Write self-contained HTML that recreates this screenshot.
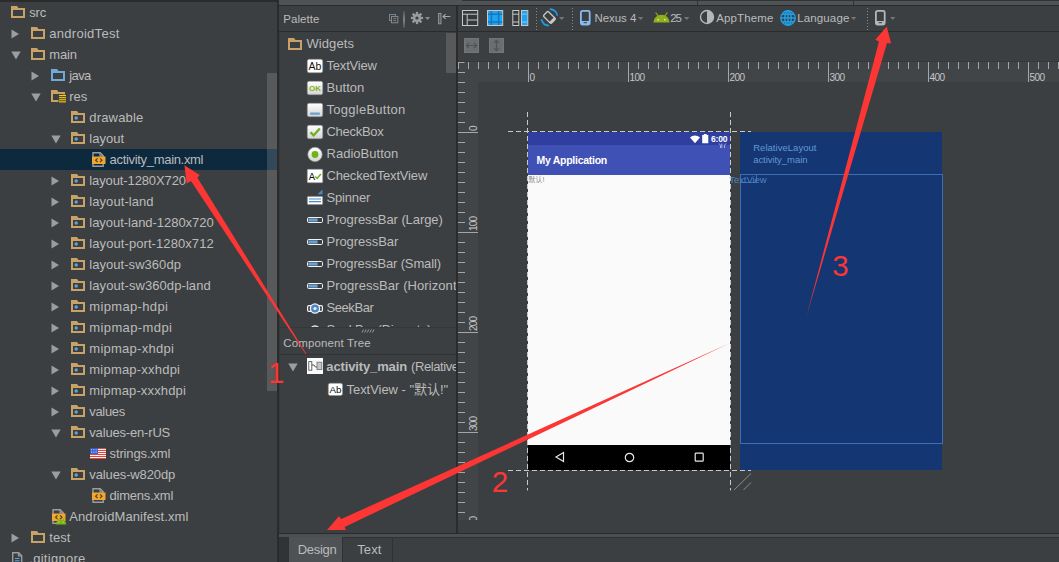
<!DOCTYPE html>
<html lang="zh"><head><meta charset="utf-8"><title>Android Studio - activity_main.xml</title>
<style>
html,body{margin:0;padding:0;}
body{width:1059px;height:562px;overflow:hidden;background:#3c3f41;position:relative;
font-family:"Liberation Sans","Noto Sans CJK SC",sans-serif;}
#root{position:absolute;left:0;top:0;width:1059px;height:562px;overflow:hidden;}
#root div,#root svg,#root span{position:absolute;display:block;}
#root svg{overflow:visible;}
.t{white-space:nowrap;}
.v{transform-origin:0 0;transform:rotate(-90deg);}
</style></head>
<body><div id="root">
<svg width="0" height="0" style="left:0;top:0"><defs><linearGradient id="wg" x1="0" y1="0" x2="0" y2="1"><stop offset="0" stop-color="#ffffff"/><stop offset="1" stop-color="#d4d4d4"/></linearGradient></defs></svg>
<div style="left:0px;top:0px;width:277px;height:562px;background:#3c3f41;"></div>
<div style="left:0px;top:0px;width:277px;height:1.5px;background:#2b2b2b;"></div>
<div style="left:0px;top:149px;width:277px;height:21px;background:#0d293e;"></div>
<div style="left:267px;top:73px;width:10px;height:318px;background:rgba(166,166,166,0.25);"></div>
<svg style="left:11px;top:6px;" width="16" height="14" viewBox="0 0 16 14"><path d="M0 0h6l1.5 2H14v10H0z" fill="#c9a267"/><rect x="2" y="4" width="10" height="6" fill="#3c3f41"/></svg>
<span id="t1" class="t" style="left:29.3px;top:2px;height:21px;line-height:21px;font-size:13px;color:#bbbbbb;letter-spacing:-0.172px;">src</span>
<svg style="left:31px;top:27px;" width="16" height="14" viewBox="0 0 16 14"><path d="M0 0h6l1.5 2H14v10H0z" fill="#c9a267"/><rect x="2" y="4" width="10" height="6" fill="#3c3f41"/></svg>
<svg style="left:11.3px;top:28.5px;" width="9" height="10" viewBox="0 0 9 10"><path d="M0.5 0.5L8 5L0.5 9.5z" fill="#9b9ea0"/></svg>
<span id="t2" class="t" style="left:49.3px;top:23px;height:21px;line-height:21px;font-size:13px;color:#bbbbbb;letter-spacing:0.278px;">androidTest</span>
<svg style="left:31px;top:48px;" width="16" height="14" viewBox="0 0 16 14"><path d="M0 0h6l1.5 2H14v10H0z" fill="#c9a267"/><rect x="2" y="4" width="10" height="6" fill="#3c3f41"/></svg>
<svg style="left:10.5px;top:51px;" width="10" height="9" viewBox="0 0 10 9"><path d="M0.3 0.5h9.4L5 8.5z" fill="#9b9ea0"/></svg>
<span id="t3" class="t" style="left:49.3px;top:44px;height:21px;line-height:21px;font-size:13px;color:#bbbbbb;letter-spacing:-0.162px;">main</span>
<svg style="left:51px;top:69px;" width="16" height="14" viewBox="0 0 16 14"><path d="M0 0h6l1.5 2H14v10H0z" fill="#6fa9d8"/><rect x="2" y="4" width="10" height="6" fill="#3c3f41"/></svg>
<svg style="left:31.3px;top:70.5px;" width="9" height="10" viewBox="0 0 9 10"><path d="M0.5 0.5L8 5L0.5 9.5z" fill="#9b9ea0"/></svg>
<span id="t4" class="t" style="left:69.3px;top:65px;height:21px;line-height:21px;font-size:13px;color:#bbbbbb;letter-spacing:-0.620px;">java</span>
<svg style="left:51px;top:90px;" width="16" height="14" viewBox="0 0 16 14"><path d="M0 0h6l1.5 2H14v10H0z" fill="#c9a267"/><rect x="2" y="4" width="10" height="6" fill="#3c3f41"/><rect x="7.5" y="4.5" width="8" height="9" fill="#3c3f41"/><rect x="8" y="5.0" width="7" height="1.1" fill="#ffcc00"/><rect x="8" y="7.1" width="7" height="1.1" fill="#ffcc00"/><rect x="8" y="9.2" width="7" height="1.1" fill="#ffcc00"/><rect x="8" y="11.3" width="7" height="1.1" fill="#ffcc00"/></svg>
<svg style="left:30.5px;top:93px;" width="10" height="9" viewBox="0 0 10 9"><path d="M0.3 0.5h9.4L5 8.5z" fill="#9b9ea0"/></svg>
<span id="t5" class="t" style="left:69.3px;top:86px;height:21px;line-height:21px;font-size:13px;color:#bbbbbb;letter-spacing:-0.031px;">res</span>
<svg style="left:71px;top:111px;" width="16" height="14" viewBox="0 0 16 14"><path d="M0 0h6l1.5 2H14v10H0z" fill="#c9a267"/><rect x="2" y="4" width="10" height="6" fill="#3c3f41"/><circle cx="5.2" cy="7" r="1.7" fill="#5fa3d8"/></svg>
<span id="t6" class="t" style="left:89.3px;top:107px;height:21px;line-height:21px;font-size:13px;color:#bbbbbb;letter-spacing:0.176px;">drawable</span>
<svg style="left:71px;top:132px;" width="16" height="14" viewBox="0 0 16 14"><path d="M0 0h6l1.5 2H14v10H0z" fill="#c9a267"/><rect x="2" y="4" width="10" height="6" fill="#3c3f41"/><circle cx="5.2" cy="7" r="1.7" fill="#5fa3d8"/></svg>
<svg style="left:50.5px;top:135px;" width="10" height="9" viewBox="0 0 10 9"><path d="M0.3 0.5h9.4L5 8.5z" fill="#9b9ea0"/></svg>
<span id="t7" class="t" style="left:89.3px;top:128px;height:21px;line-height:21px;font-size:13px;color:#bbbbbb;letter-spacing:0.019px;">layout</span>
<svg style="left:92px;top:151.5px;" width="14" height="16" viewBox="0 0 14 16"><path d="M1 0.7h7.2l3 3V14.3H1z" fill="none" stroke="#9a9da0" stroke-width="1.4"/><path d="M8 0.7v3.2h3.2" fill="none" stroke="#9a9da0" stroke-width="1.2"/><rect x="0" y="4.5" width="13.5" height="7.5" fill="#f0a630"/><path d="M5.6 6.3L3.6 8.2L5.6 10.1M8 6.3L10 8.2L8 10.1" fill="none" stroke="#4a3a1a" stroke-width="1.1"/></svg>
<span id="t8" class="t" style="left:109.6px;top:149px;height:21px;line-height:21px;font-size:13px;color:#bbbbbb;letter-spacing:-0.317px;">activity_main.xml</span>
<svg style="left:71px;top:174px;" width="16" height="14" viewBox="0 0 16 14"><path d="M0 0h6l1.5 2H14v10H0z" fill="#c9a267"/><rect x="2" y="4" width="10" height="6" fill="#3c3f41"/><circle cx="5.2" cy="7" r="1.7" fill="#5fa3d8"/></svg>
<svg style="left:51.3px;top:175.5px;" width="9" height="10" viewBox="0 0 9 10"><path d="M0.5 0.5L8 5L0.5 9.5z" fill="#9b9ea0"/></svg>
<span id="t9" class="t" style="left:89.3px;top:170px;height:21px;line-height:21px;font-size:13px;color:#bbbbbb;letter-spacing:-0.115px;">layout-1280X720</span>
<svg style="left:71px;top:195px;" width="16" height="14" viewBox="0 0 16 14"><path d="M0 0h6l1.5 2H14v10H0z" fill="#c9a267"/><rect x="2" y="4" width="10" height="6" fill="#3c3f41"/><circle cx="5.2" cy="7" r="1.7" fill="#5fa3d8"/></svg>
<svg style="left:51.3px;top:196.5px;" width="9" height="10" viewBox="0 0 9 10"><path d="M0.5 0.5L8 5L0.5 9.5z" fill="#9b9ea0"/></svg>
<span id="t10" class="t" style="left:89.3px;top:191px;height:21px;line-height:21px;font-size:13px;color:#bbbbbb;letter-spacing:0.069px;">layout-land</span>
<svg style="left:71px;top:216px;" width="16" height="14" viewBox="0 0 16 14"><path d="M0 0h6l1.5 2H14v10H0z" fill="#c9a267"/><rect x="2" y="4" width="10" height="6" fill="#3c3f41"/><circle cx="5.2" cy="7" r="1.7" fill="#5fa3d8"/></svg>
<svg style="left:51.3px;top:217.5px;" width="9" height="10" viewBox="0 0 9 10"><path d="M0.5 0.5L8 5L0.5 9.5z" fill="#9b9ea0"/></svg>
<span id="t11" class="t" style="left:89.3px;top:212px;height:21px;line-height:21px;font-size:13px;color:#bbbbbb;letter-spacing:-0.034px;">layout-land-1280x720</span>
<svg style="left:71px;top:237px;" width="16" height="14" viewBox="0 0 16 14"><path d="M0 0h6l1.5 2H14v10H0z" fill="#c9a267"/><rect x="2" y="4" width="10" height="6" fill="#3c3f41"/><circle cx="5.2" cy="7" r="1.7" fill="#5fa3d8"/></svg>
<svg style="left:51.3px;top:238.5px;" width="9" height="10" viewBox="0 0 9 10"><path d="M0.5 0.5L8 5L0.5 9.5z" fill="#9b9ea0"/></svg>
<span id="t12" class="t" style="left:89.3px;top:233px;height:21px;line-height:21px;font-size:13px;color:#bbbbbb;letter-spacing:0.081px;">layout-port-1280x712</span>
<svg style="left:71px;top:258px;" width="16" height="14" viewBox="0 0 16 14"><path d="M0 0h6l1.5 2H14v10H0z" fill="#c9a267"/><rect x="2" y="4" width="10" height="6" fill="#3c3f41"/><circle cx="5.2" cy="7" r="1.7" fill="#5fa3d8"/></svg>
<svg style="left:51.3px;top:259.5px;" width="9" height="10" viewBox="0 0 9 10"><path d="M0.5 0.5L8 5L0.5 9.5z" fill="#9b9ea0"/></svg>
<span id="t13" class="t" style="left:89.3px;top:254px;height:21px;line-height:21px;font-size:13px;color:#bbbbbb;letter-spacing:0.041px;">layout-sw360dp</span>
<svg style="left:71px;top:279px;" width="16" height="14" viewBox="0 0 16 14"><path d="M0 0h6l1.5 2H14v10H0z" fill="#c9a267"/><rect x="2" y="4" width="10" height="6" fill="#3c3f41"/><circle cx="5.2" cy="7" r="1.7" fill="#5fa3d8"/></svg>
<svg style="left:51.3px;top:280.5px;" width="9" height="10" viewBox="0 0 9 10"><path d="M0.5 0.5L8 5L0.5 9.5z" fill="#9b9ea0"/></svg>
<span id="t14" class="t" style="left:89.3px;top:275px;height:21px;line-height:21px;font-size:13px;color:#bbbbbb;letter-spacing:0.080px;">layout-sw360dp-land</span>
<svg style="left:71px;top:300px;" width="16" height="14" viewBox="0 0 16 14"><path d="M0 0h6l1.5 2H14v10H0z" fill="#c9a267"/><rect x="2" y="4" width="10" height="6" fill="#3c3f41"/><circle cx="5.2" cy="7" r="1.7" fill="#5fa3d8"/></svg>
<svg style="left:51.3px;top:301.5px;" width="9" height="10" viewBox="0 0 9 10"><path d="M0.5 0.5L8 5L0.5 9.5z" fill="#9b9ea0"/></svg>
<span id="t15" class="t" style="left:89.3px;top:296px;height:21px;line-height:21px;font-size:13px;color:#bbbbbb;letter-spacing:0.344px;">mipmap-hdpi</span>
<svg style="left:71px;top:321px;" width="16" height="14" viewBox="0 0 16 14"><path d="M0 0h6l1.5 2H14v10H0z" fill="#c9a267"/><rect x="2" y="4" width="10" height="6" fill="#3c3f41"/><circle cx="5.2" cy="7" r="1.7" fill="#5fa3d8"/></svg>
<svg style="left:51.3px;top:322.5px;" width="9" height="10" viewBox="0 0 9 10"><path d="M0.5 0.5L8 5L0.5 9.5z" fill="#9b9ea0"/></svg>
<span id="t16" class="t" style="left:89.3px;top:317px;height:21px;line-height:21px;font-size:13px;color:#bbbbbb;letter-spacing:0.385px;">mipmap-mdpi</span>
<svg style="left:71px;top:342px;" width="16" height="14" viewBox="0 0 16 14"><path d="M0 0h6l1.5 2H14v10H0z" fill="#c9a267"/><rect x="2" y="4" width="10" height="6" fill="#3c3f41"/><circle cx="5.2" cy="7" r="1.7" fill="#5fa3d8"/></svg>
<svg style="left:51.3px;top:343.5px;" width="9" height="10" viewBox="0 0 9 10"><path d="M0.5 0.5L8 5L0.5 9.5z" fill="#9b9ea0"/></svg>
<span id="t17" class="t" style="left:89.3px;top:338px;height:21px;line-height:21px;font-size:13px;color:#bbbbbb;letter-spacing:0.259px;">mipmap-xhdpi</span>
<svg style="left:71px;top:363px;" width="16" height="14" viewBox="0 0 16 14"><path d="M0 0h6l1.5 2H14v10H0z" fill="#c9a267"/><rect x="2" y="4" width="10" height="6" fill="#3c3f41"/><circle cx="5.2" cy="7" r="1.7" fill="#5fa3d8"/></svg>
<svg style="left:51.3px;top:364.5px;" width="9" height="10" viewBox="0 0 9 10"><path d="M0.5 0.5L8 5L0.5 9.5z" fill="#9b9ea0"/></svg>
<span id="t18" class="t" style="left:89.3px;top:359px;height:21px;line-height:21px;font-size:13px;color:#bbbbbb;letter-spacing:0.212px;">mipmap-xxhdpi</span>
<svg style="left:71px;top:384px;" width="16" height="14" viewBox="0 0 16 14"><path d="M0 0h6l1.5 2H14v10H0z" fill="#c9a267"/><rect x="2" y="4" width="10" height="6" fill="#3c3f41"/><circle cx="5.2" cy="7" r="1.7" fill="#5fa3d8"/></svg>
<svg style="left:51.3px;top:385.5px;" width="9" height="10" viewBox="0 0 9 10"><path d="M0.5 0.5L8 5L0.5 9.5z" fill="#9b9ea0"/></svg>
<span id="t19" class="t" style="left:89.3px;top:380px;height:21px;line-height:21px;font-size:13px;color:#bbbbbb;letter-spacing:0.142px;">mipmap-xxxhdpi</span>
<svg style="left:71px;top:405px;" width="16" height="14" viewBox="0 0 16 14"><path d="M0 0h6l1.5 2H14v10H0z" fill="#c9a267"/><rect x="2" y="4" width="10" height="6" fill="#3c3f41"/><circle cx="5.2" cy="7" r="1.7" fill="#5fa3d8"/></svg>
<svg style="left:51.3px;top:406.5px;" width="9" height="10" viewBox="0 0 9 10"><path d="M0.5 0.5L8 5L0.5 9.5z" fill="#9b9ea0"/></svg>
<span id="t20" class="t" style="left:89.3px;top:401px;height:21px;line-height:21px;font-size:13px;color:#bbbbbb;letter-spacing:-0.336px;">values</span>
<svg style="left:71px;top:426px;" width="16" height="14" viewBox="0 0 16 14"><path d="M0 0h6l1.5 2H14v10H0z" fill="#c9a267"/><rect x="2" y="4" width="10" height="6" fill="#3c3f41"/><circle cx="5.2" cy="7" r="1.7" fill="#5fa3d8"/></svg>
<svg style="left:50.5px;top:429px;" width="10" height="9" viewBox="0 0 10 9"><path d="M0.3 0.5h9.4L5 8.5z" fill="#9b9ea0"/></svg>
<span id="t21" class="t" style="left:89.3px;top:422px;height:21px;line-height:21px;font-size:13px;color:#bbbbbb;letter-spacing:-0.174px;">values-en-rUS</span>
<svg style="left:90px;top:448px;" width="16" height="11" viewBox="0 0 16 11"><rect x="0" y="0" width="16" height="11" fill="#f4f4f4"/><rect x="0" y="0" width="16" height="1" fill="#e0463c"/><rect x="0" y="2" width="16" height="1" fill="#e0463c"/><rect x="0" y="4" width="16" height="1" fill="#e0463c"/><rect x="0" y="6" width="16" height="1" fill="#e0463c"/><rect x="0" y="8" width="16" height="1" fill="#e0463c"/><rect x="0" y="10" width="16" height="1" fill="#e0463c"/><rect x="0" y="0" width="8" height="6" fill="#3558c8"/><rect x="0.9999999999999999" y="1.1" width="0.8" height="0.8" fill="#dfe6ff"/><rect x="2.8000000000000003" y="1.1" width="0.8" height="0.8" fill="#dfe6ff"/><rect x="4.6" y="1.1" width="0.8" height="0.8" fill="#dfe6ff"/><rect x="6.3999999999999995" y="1.1" width="0.8" height="0.8" fill="#dfe6ff"/><rect x="0.9999999999999999" y="2.7" width="0.8" height="0.8" fill="#dfe6ff"/><rect x="2.8000000000000003" y="2.7" width="0.8" height="0.8" fill="#dfe6ff"/><rect x="4.6" y="2.7" width="0.8" height="0.8" fill="#dfe6ff"/><rect x="6.3999999999999995" y="2.7" width="0.8" height="0.8" fill="#dfe6ff"/><rect x="0.9999999999999999" y="4.3" width="0.8" height="0.8" fill="#dfe6ff"/><rect x="2.8000000000000003" y="4.3" width="0.8" height="0.8" fill="#dfe6ff"/><rect x="4.6" y="4.3" width="0.8" height="0.8" fill="#dfe6ff"/><rect x="6.3999999999999995" y="4.3" width="0.8" height="0.8" fill="#dfe6ff"/></svg>
<span id="t22" class="t" style="left:109.6px;top:443px;height:21px;line-height:21px;font-size:13px;color:#bbbbbb;letter-spacing:-0.142px;">strings.xml</span>
<svg style="left:71px;top:468px;" width="16" height="14" viewBox="0 0 16 14"><path d="M0 0h6l1.5 2H14v10H0z" fill="#c9a267"/><rect x="2" y="4" width="10" height="6" fill="#3c3f41"/><circle cx="5.2" cy="7" r="1.7" fill="#5fa3d8"/></svg>
<svg style="left:50.5px;top:471px;" width="10" height="9" viewBox="0 0 10 9"><path d="M0.3 0.5h9.4L5 8.5z" fill="#9b9ea0"/></svg>
<span id="t23" class="t" style="left:89.3px;top:464px;height:21px;line-height:21px;font-size:13px;color:#bbbbbb;letter-spacing:-0.121px;">values-w820dp</span>
<svg style="left:92px;top:487.5px;" width="14" height="16" viewBox="0 0 14 16"><path d="M1 0.7h7.2l3 3V14.3H1z" fill="none" stroke="#9a9da0" stroke-width="1.4"/><path d="M8 0.7v3.2h3.2" fill="none" stroke="#9a9da0" stroke-width="1.2"/><rect x="0" y="4.5" width="13.5" height="7.5" fill="#f0a630"/><path d="M5.6 6.3L3.6 8.2L5.6 10.1M8 6.3L10 8.2L8 10.1" fill="none" stroke="#4a3a1a" stroke-width="1.1"/></svg>
<span id="t24" class="t" style="left:109.6px;top:485px;height:21px;line-height:21px;font-size:13px;color:#bbbbbb;letter-spacing:-0.228px;">dimens.xml</span>
<svg style="left:52px;top:508.5px;" width="14" height="16" viewBox="0 0 14 16"><path d="M1 0.7h7.2l3 3V14.3H1z" fill="none" stroke="#9a9da0" stroke-width="1.4"/><path d="M8 0.7v3.2h3.2" fill="none" stroke="#9a9da0" stroke-width="1.2"/><rect x="0" y="4.5" width="13.5" height="7.5" fill="#f0a630"/><path d="M5.6 6.3L3.6 8.2L5.6 10.1M8 6.3L10 8.2L8 10.1" fill="none" stroke="#4a3a1a" stroke-width="1.1"/><path d="M3.8 15.4a5.2 5 0 0 1 10.4 0z" fill="#7cb518"/><path d="M5.4 8.8l1.6 2.4M12.6 8.8l-1.6 2.4" stroke="#7cb518" stroke-width="1"/><circle cx="7" cy="13" r="0.6" fill="#d8efb0"/><circle cx="11" cy="13" r="0.6" fill="#d8efb0"/></svg>
<span id="t25" class="t" style="left:69.3px;top:506px;height:21px;line-height:21px;font-size:13px;color:#bbbbbb;letter-spacing:0.068px;">AndroidManifest.xml</span>
<svg style="left:31px;top:531px;" width="16" height="14" viewBox="0 0 16 14"><path d="M0 0h6l1.5 2H14v10H0z" fill="#c9a267"/><rect x="2" y="4" width="10" height="6" fill="#3c3f41"/></svg>
<svg style="left:11.3px;top:532.5px;" width="9" height="10" viewBox="0 0 9 10"><path d="M0.5 0.5L8 5L0.5 9.5z" fill="#9b9ea0"/></svg>
<span id="t26" class="t" style="left:49.3px;top:527px;height:21px;line-height:21px;font-size:13px;color:#bbbbbb;letter-spacing:0.010px;">test</span>
<svg style="left:12px;top:552px;" width="11" height="13" viewBox="0 0 11 13"><path d="M0.7 0.7h6l3 3V13H0.7z" fill="none" stroke="#9a9da0" stroke-width="1.4"/><path d="M6.5 0.7v3.2h3.2" fill="none" stroke="#9a9da0" stroke-width="1.2"/><path d="M3 6.5h4.5M3 8.7h4.5M3 10.9h4.5" stroke="#5fa3d8" stroke-width="1.1"/></svg>
<span id="t27" class="t" style="left:29.3px;top:548px;height:21px;line-height:21px;font-size:13px;color:#bbbbbb;letter-spacing:0.280px;">.gitignore</span>
<div style="left:277px;top:0px;width:1.5px;height:562px;background:#2b2b2b;"></div>
<div style="left:278.5px;top:0px;width:781px;height:5px;background:#4f5355;"></div>
<div style="left:462px;top:0px;width:597px;height:1px;background:#313436;"></div>
<div style="left:278.5px;top:5px;width:781px;height:1.2px;background:#2b2b2b;"></div>
<div style="left:697px;top:0px;width:1.2px;height:5px;background:#313436;"></div>
<div style="left:853px;top:0px;width:1.2px;height:5px;background:#313436;"></div>
<div style="left:278.5px;top:6.2px;width:781px;height:556px;background:#3c3f41;"></div>
<div style="left:278.5px;top:30.5px;width:781px;height:1.2px;background:#2b2b2b;"></div>
<span id="t28" class="t" style="left:283.3px;top:7px;height:24px;line-height:24px;font-size:11.5px;color:#bbbbbb;letter-spacing:0.031px;">Palette</span>
<svg style="left:389px;top:14px;" width="10" height="10" viewBox="0 0 10 10"><rect x="0.5" y="0.5" width="6" height="6" fill="none" stroke="#6f8596" stroke-width="1"/><rect x="2.5" y="2.5" width="6.3" height="6.3" fill="#3c3f41" stroke="#858789" stroke-width="1"/><path d="M4.2 4.7h3M4.2 6.7h3" stroke="#858789" stroke-width="0.9"/></svg>
<div style="left:403px;top:11px;width:2px;height:16.5px;background:linear-gradient(to bottom,#4c4f51,#7a7c7e 40%,#7a7c7e 60%,#4c4f51);"></div>
<svg style="left:411px;top:12px;" width="12" height="12" viewBox="0 0 12 12"><g transform="translate(6 6)" fill="#999b9d"><rect x="-1.15" y="-6.1" width="2.3" height="3.6" transform="rotate(0)"/><rect x="-1.15" y="-6.1" width="2.3" height="3.6" transform="rotate(45)"/><rect x="-1.15" y="-6.1" width="2.3" height="3.6" transform="rotate(90)"/><rect x="-1.15" y="-6.1" width="2.3" height="3.6" transform="rotate(135)"/><rect x="-1.15" y="-6.1" width="2.3" height="3.6" transform="rotate(180)"/><rect x="-1.15" y="-6.1" width="2.3" height="3.6" transform="rotate(225)"/><rect x="-1.15" y="-6.1" width="2.3" height="3.6" transform="rotate(270)"/><rect x="-1.15" y="-6.1" width="2.3" height="3.6" transform="rotate(315)"/><circle r="4.1"/><circle r="1.6" fill="#3c3f41"/></g></svg>
<svg style="left:425px;top:17px;" width="6" height="4" viewBox="0 0 6 4"><path d="M0 0h5.2L2.6 3.1z" fill="#8a8d8f"/></svg>
<svg style="left:437.5px;top:13px;" width="14" height="12" viewBox="0 0 14 12"><rect x="0.6" y="0.5" width="2.4" height="10.3" fill="#55585a" stroke="#9a9c9e" stroke-width="0.9"/><path d="M12.4 3.5H5.4M7.6 1.1L5 3.5L7.6 5.9" fill="none" stroke="#a4a6a8" stroke-width="1.1"/></svg>
<div style="left:278.5px;top:32px;width:1px;height:500px;background:#36393b;"></div>
<div style="left:279px;top:32px;width:177px;height:295px;overflow:hidden">
<svg style="left:9px;top:6px;" width="16" height="14" viewBox="0 0 16 14"><path d="M0 0h6l1.5 2H14v10H0z" fill="#c9a267"/><rect x="2" y="4" width="10" height="6" fill="#3c3f41"/></svg>
<span id="t29" class="t" style="left:27.5px;top:1px;height:22px;line-height:22px;font-size:13px;color:#bbbbbb;letter-spacing:0.072px;">Widgets</span>
<svg style="left:28px;top:27px;" width="16" height="14" viewBox="0 0 16 14"><rect x="0.3" y="0.3" width="15.4" height="13.4" rx="1.8" fill="#fff" stroke="#8e9092" stroke-width="0.6"/><text x="8" y="11.2" font-size="10.5" text-anchor="middle" fill="#111" font-family="Liberation Sans, sans-serif">Ab</text></svg>
<span id="t30" class="t" style="left:47.5px;top:23px;height:22px;line-height:22px;font-size:13px;color:#bbbbbb;letter-spacing:-0.185px;white-space:nowrap;">TextView</span>
<svg style="left:28px;top:49px;" width="16" height="14" viewBox="0 0 16 14"><rect x="0.3" y="0.3" width="15.4" height="13.4" rx="1.8" fill="url(#wg)" stroke="#8e9092" stroke-width="0.6"/><text x="8" y="10.2" font-size="8" font-weight="bold" text-anchor="middle" fill="#86b01c" font-family="Liberation Sans, sans-serif">OK</text></svg>
<span id="t31" class="t" style="left:47.5px;top:45px;height:22px;line-height:22px;font-size:13px;color:#bbbbbb;letter-spacing:0.041px;white-space:nowrap;">Button</span>
<svg style="left:28px;top:71px;" width="16" height="14" viewBox="0 0 16 14"><rect x="0.3" y="0.3" width="15.4" height="13.4" rx="1.8" fill="url(#wg)" stroke="#8e9092" stroke-width="0.6"/><rect x="3" y="9.6" width="10" height="2.2" rx="1" fill="#6a9fd0"/></svg>
<span id="t32" class="t" style="left:47.5px;top:67px;height:22px;line-height:22px;font-size:13px;color:#bbbbbb;letter-spacing:0.263px;white-space:nowrap;">ToggleButton</span>
<svg style="left:28px;top:93px;" width="16" height="14" viewBox="0 0 16 14"><rect x="0.3" y="0.3" width="15.4" height="13.4" rx="1.8" fill="url(#wg)" stroke="#8e9092" stroke-width="0.6"/><path d="M3.5 7.2L6.6 10.4L12.8 3.4" fill="none" stroke="#6fae1c" stroke-width="2.3"/></svg>
<span id="t33" class="t" style="left:47.5px;top:89px;height:22px;line-height:22px;font-size:13px;color:#bbbbbb;letter-spacing:-0.293px;white-space:nowrap;">CheckBox</span>
<svg style="left:28px;top:115px;" width="16" height="15" viewBox="0 0 16 15"><circle cx="8" cy="7.5" r="7.2" fill="url(#wg)" stroke="#8e9092" stroke-width="0.6"/><circle cx="8" cy="7.5" r="3.4" fill="#6fb414"/></svg>
<span id="t34" class="t" style="left:47.5px;top:111px;height:22px;line-height:22px;font-size:13px;color:#bbbbbb;letter-spacing:0.024px;white-space:nowrap;">RadioButton</span>
<svg style="left:28px;top:137px;" width="16" height="14" viewBox="0 0 16 14"><rect x="0.3" y="0.3" width="15.4" height="13.4" rx="0.8" fill="#fff" stroke="#8e9092" stroke-width="0.6"/><text x="4.8" y="10.8" font-size="10.5" text-anchor="middle" fill="#111" font-family="Liberation Mono, monospace">A</text><path d="M8.3 7.4L10.2 9.4L13.8 5" fill="none" stroke="#6fae1c" stroke-width="1.5"/></svg>
<span id="t35" class="t" style="left:47.5px;top:133px;height:22px;line-height:22px;font-size:13px;color:#bbbbbb;letter-spacing:-0.164px;white-space:nowrap;">CheckedTextView</span>
<svg style="left:28px;top:157px;" width="16" height="16" viewBox="0 0 16 16"><rect x="0.4" y="7.4" width="15.2" height="8.2" rx="0.8" fill="#fff" stroke="#8e9092" stroke-width="0.6"/><path d="M2 10h12M2 12.6h12" stroke="#4a88c7" stroke-width="1.1"/><path d="M15.5 0.5v4.8h-5z" fill="#4a88c7"/></svg>
<span id="t36" class="t" style="left:47.5px;top:155px;height:22px;line-height:22px;font-size:13px;color:#bbbbbb;letter-spacing:-0.169px;white-space:nowrap;">Spinner</span>
<svg style="left:28px;top:185px;" width="16" height="6" viewBox="0 0 16 6"><rect x="0.5" y="0.5" width="15" height="5" rx="1.2" fill="#3c3f41" stroke="#f2f2f2" stroke-width="1"/><rect x="1.4" y="1.4" width="9.2" height="3.2" fill="#6a9fd0"/></svg>
<span id="t37" class="t" style="left:47.5px;top:177px;height:22px;line-height:22px;font-size:13px;color:#bbbbbb;letter-spacing:-0.082px;white-space:nowrap;">ProgressBar (Large)</span>
<svg style="left:28px;top:207px;" width="16" height="6" viewBox="0 0 16 6"><rect x="0.5" y="0.5" width="15" height="5" rx="1.2" fill="#3c3f41" stroke="#f2f2f2" stroke-width="1"/><rect x="1.4" y="1.4" width="9.2" height="3.2" fill="#6a9fd0"/></svg>
<span id="t38" class="t" style="left:47.5px;top:199px;height:22px;line-height:22px;font-size:13px;color:#bbbbbb;letter-spacing:-0.045px;white-space:nowrap;">ProgressBar</span>
<svg style="left:28px;top:229px;" width="16" height="6" viewBox="0 0 16 6"><rect x="0.5" y="0.5" width="15" height="5" rx="1.2" fill="#3c3f41" stroke="#f2f2f2" stroke-width="1"/><rect x="1.4" y="1.4" width="9.2" height="3.2" fill="#6a9fd0"/></svg>
<span id="t39" class="t" style="left:47.5px;top:221px;height:22px;line-height:22px;font-size:13px;color:#bbbbbb;letter-spacing:-0.141px;white-space:nowrap;">ProgressBar (Small)</span>
<svg style="left:28px;top:251px;" width="16" height="6" viewBox="0 0 16 6"><rect x="0.5" y="0.5" width="15" height="5" rx="1.2" fill="#3c3f41" stroke="#f2f2f2" stroke-width="1"/><rect x="1.4" y="1.4" width="9.2" height="3.2" fill="#6a9fd0"/></svg>
<span id="t40" class="t" style="left:47.5px;top:243px;height:22px;line-height:22px;font-size:13px;color:#bbbbbb;white-space:nowrap;letter-spacing:0.07px;">ProgressBar (Horizontal)</span>
<svg style="left:28px;top:271px;" width="16" height="11" viewBox="0 0 16 11"><rect x="0.6" y="2.6" width="14.8" height="5.8" rx="1.2" fill="#3c3f41" stroke="#f2f2f2" stroke-width="1.2"/><circle cx="8" cy="5.5" r="4.6" fill="#4a88c7" stroke="#f2f2f2" stroke-width="1.3"/><circle cx="8" cy="5.5" r="1.6" fill="#f2f2f2"/></svg>
<span id="t41" class="t" style="left:47.5px;top:265px;height:22px;line-height:22px;font-size:13px;color:#bbbbbb;letter-spacing:-0.429px;white-space:nowrap;">SeekBar</span>
<svg style="left:28px;top:293px;" width="16" height="11" viewBox="0 0 16 11"><rect x="0.6" y="2.6" width="14.8" height="5.8" rx="1.2" fill="#3c3f41" stroke="#f2f2f2" stroke-width="1.2"/><circle cx="8" cy="5.5" r="4.6" fill="#4a88c7" stroke="#f2f2f2" stroke-width="1.3"/><circle cx="8" cy="5.5" r="1.6" fill="#f2f2f2"/></svg>
<span id="t42" class="t" style="left:47.5px;top:287px;height:22px;line-height:22px;font-size:13px;color:#bbbbbb;letter-spacing:-0.295px;white-space:nowrap;">SeekBar (Discrete)</span>
</div>
<div style="left:446px;top:33px;width:10px;height:40px;background:rgba(166,166,166,0.25);"></div>
<svg style="left:360.5px;top:329px;" width="16" height="4" viewBox="0 0 16 4"><path d="M1.0 3.5l1.6-3" stroke="#a0a3a5" stroke-width="0.9"/><path d="M3.6 3.5l1.6-3" stroke="#a0a3a5" stroke-width="0.9"/><path d="M6.2 3.5l1.6-3" stroke="#a0a3a5" stroke-width="0.9"/><path d="M8.8 3.5l1.6-3" stroke="#a0a3a5" stroke-width="0.9"/><path d="M11.4 3.5l1.6-3" stroke="#a0a3a5" stroke-width="0.9"/></svg>
<div style="left:279px;top:327px;width:177.5px;height:1px;background:#35383a;"></div>
<span id="t43" class="t" style="left:283.3px;top:332px;height:22px;line-height:22px;font-size:11.5px;color:#bbbbbb;letter-spacing:0.125px;">Component Tree</span>
<div style="left:278.5px;top:353.6px;width:178.5px;height:1.2px;background:#313335;"></div>
<div style="left:279px;top:355px;width:177px;height:177px;overflow:hidden">
<svg style="left:8.5px;top:8px;" width="10" height="9" viewBox="0 0 10 9"><path d="M0.3 0.5h9.4L5 8.5z" fill="#9b9ea0"/></svg>
<svg style="left:28px;top:3px;" width="16" height="16" viewBox="0 0 16 16"><rect x="0" y="0" width="16" height="16" fill="#fbfbfb"/><rect x="1.8" y="3.6" width="3" height="8.6" fill="#fff" stroke="#555" stroke-width="0.9"/><rect x="10" y="4.2" width="4.8" height="7.4" fill="#c6c6c6" stroke="#777" stroke-width="0.9"/><path d="M4.8 7h2.2l1.4 2H10" stroke="#444" stroke-width="0.9" fill="none"/></svg>
<span id="t44" class="t" style="left:47.30000000000001px;top:1px;height:22px;line-height:22px;font-size:13px;color:#bbbbbb;font-weight:bold;letter-spacing:-0.131px;white-space:nowrap;">activity_main</span>
<span id="t45" class="t" style="left:132px;top:1px;height:22px;line-height:22px;font-size:13px;color:#bbbbbb;white-space:nowrap;letter-spacing:-0.4px;">(RelativeLayout)</span>
<svg style="left:48.60000000000002px;top:27.600000000000023px;" width="15" height="13" viewBox="0 0 15 13"><rect x="0.3" y="0.3" width="14.2" height="12.2" rx="1.8" fill="#fff" stroke="#8e9092" stroke-width="0.6"/><text x="7.4" y="10.3" font-size="9.8" text-anchor="middle" fill="#111" font-family="Liberation Sans, sans-serif">Ab</text></svg>
<span id="t46" class="t" style="left:67.5px;top:23.600000000000023px;height:22px;line-height:22px;font-size:13px;color:#bbbbbb;letter-spacing:-0.039px;white-space:nowrap;">TextView - "默认!"</span>
</div>
<div style="left:456px;top:6.2px;width:2px;height:526.5px;background:#2b2b2b;"></div>
<svg style="left:462px;top:10px;" width="16" height="16" viewBox="0 0 16 16"><rect x="0.5" y="0.5" width="15.2" height="15" fill="#36393b" stroke="#c6c8c9" stroke-width="1"/><path d="M0.5 4.2h15.2M5.2 4.2v11.3M5.2 10h10.5" stroke="#c6c8c9" stroke-width="1" fill="none"/></svg>
<svg style="left:487px;top:10px;" width="16" height="16" viewBox="0 0 16 16"><rect x="0.5" y="0.5" width="15.2" height="15" fill="#1ea4f2" stroke="#c6c8c9" stroke-width="1"/><path d="M1 4.2h14.2M1 12h14.2M4.4 1v14M11.6 1v14" stroke="#1877b4" stroke-width="1.5"/></svg>
<svg style="left:512px;top:10px;" width="17" height="16" viewBox="0 0 17 16"><rect x="0.8" y="0.5" width="6" height="15" fill="#36393b" stroke="#c6c8c9" stroke-width="1"/><path d="M0.8 4.2h6M0.8 12h6" stroke="#c6c8c9" stroke-width="1"/><rect x="9.5" y="0.5" width="6.3" height="15" fill="#1ea4f2" stroke="#c6c8c9" stroke-width="1"/><path d="M10 4.2h5.3M10 12h5.3" stroke="#6cc0f0" stroke-width="1.3"/></svg>
<svg style="left:536px;top:8px;" width="2" height="23" viewBox="0 0 2 23"><path d="M0.5 0v22" stroke="#85888a" stroke-width="1" stroke-dasharray="1 2"/></svg>
<svg style="left:540.5px;top:8.5px;" width="17" height="17" viewBox="0 0 17 17"><g transform="translate(8.4 8.4) rotate(-45)"><rect x="-3.4" y="-5.6" width="6.8" height="11.2" rx="1.3" fill="none" stroke="#c6c8c9" stroke-width="1.3"/><rect x="-3.4" y="3.2" width="6.8" height="2.4" fill="#c6c8c9"/></g><path d="M8.8 0.2A8.3 8.3 0 0 1 16.4 6.6M8 16.6A8.3 8.3 0 0 1 0.4 10.2" fill="none" stroke="#1ea0e8" stroke-width="1.7"/></svg>
<svg style="left:559px;top:17px;" width="6" height="4" viewBox="0 0 6 4"><path d="M0 0h5.4L2.7 3.1z" fill="#737678"/></svg>
<svg style="left:572px;top:8px;" width="2" height="23" viewBox="0 0 2 23"><path d="M0.5 0v22" stroke="#85888a" stroke-width="1" stroke-dasharray="1 2"/></svg>
<svg style="left:580px;top:9.5px;" width="11" height="15.5" viewBox="0 0 11 15.5"><rect x="0.9" y="0.9" width="8.8" height="13.6" rx="1.5" fill="none" stroke="#86bdf0" stroke-width="1.8"/><rect x="0.9" y="11" width="8.8" height="3.5" fill="#86bdf0"/><rect x="3.6" y="12.2" width="3.4" height="1" fill="#3c3f41"/></svg>
<span id="t47" class="t" style="left:594.4px;top:6px;height:25px;line-height:25px;font-size:11.5px;color:#bbbbbb;letter-spacing:-0.048px;">Nexus 4</span>
<svg style="left:638px;top:17px;" width="6" height="4" viewBox="0 0 6 4"><path d="M0 0h5.4L2.7 3.1z" fill="#737678"/></svg>
<svg style="left:652.5px;top:11.5px;" width="17" height="11" viewBox="0 0 17 11"><path d="M0.4 10.5a8.1 7.7 0 0 1 16.2 0z" fill="#8fb01b"/><path d="M2.6 0.5l2.5 3.4M14.4 0.5l-2.5 3.4" stroke="#8fb01b" stroke-width="1.1"/><circle cx="5.1" cy="7.7" r="0.75" fill="#fff"/><circle cx="11.9" cy="7.7" r="0.75" fill="#fff"/></svg>
<span id="t48" class="t" style="left:670.3px;top:6px;height:25px;line-height:25px;font-size:11.5px;color:#bbbbbb;letter-spacing:-1.200px;">25</span>
<svg style="left:684px;top:17px;" width="6" height="4" viewBox="0 0 6 4"><path d="M0 0h5.4L2.7 3.1z" fill="#737678"/></svg>
<svg style="left:699px;top:9px;" width="16" height="16" viewBox="0 0 16 16"><circle cx="8" cy="8" r="6.5" fill="none" stroke="#b4b7b9" stroke-width="1.4"/><path d="M8 1.5a6.5 6.5 0 0 1 0 13z" fill="#b4b7b9"/></svg>
<span id="t49" class="t" style="left:716.3px;top:6px;height:25px;line-height:25px;font-size:11.5px;color:#bbbbbb;letter-spacing:0.105px;">AppTheme</span>
<svg style="left:780px;top:9.5px;" width="16" height="16" viewBox="0 0 16 16"><g fill="none" stroke="#1ea0e8" stroke-width="1.4"><circle cx="8" cy="8" r="7.2"/><ellipse cx="8" cy="8" rx="3.2" ry="7.2"/><path d="M8 0.8v14.4M0.8 8h14.4M2 4.3h12M2 11.7h12"/></g></svg>
<span id="t50" class="t" style="left:797.3px;top:6px;height:25px;line-height:25px;font-size:11.5px;color:#bbbbbb;letter-spacing:0.118px;">Language</span>
<svg style="left:851px;top:17px;" width="6" height="4" viewBox="0 0 6 4"><path d="M0 0h5.4L2.7 3.1z" fill="#737678"/></svg>
<svg style="left:867px;top:8px;" width="2" height="23" viewBox="0 0 2 23"><path d="M0.5 0v22" stroke="#85888a" stroke-width="1" stroke-dasharray="1 2"/></svg>
<svg style="left:875px;top:9.5px;" width="11" height="15.5" viewBox="0 0 11 15.5"><rect x="0.9" y="0.9" width="8.8" height="13.6" rx="1.5" fill="none" stroke="#b4b7b9" stroke-width="1.8"/><rect x="0.9" y="11" width="8.8" height="3.5" fill="#b4b7b9"/><rect x="3.6" y="12.2" width="3.4" height="1" fill="#3c3f41"/></svg>
<svg style="left:890px;top:17px;" width="6" height="4" viewBox="0 0 6 4"><path d="M0 0h5.4L2.7 3.1z" fill="#737678"/></svg>
<svg style="left:464px;top:38px;" width="15" height="15" viewBox="0 0 15 15"><rect x="0.5" y="0.5" width="14" height="14" fill="#6b6d6e" stroke="#747677" stroke-width="1"/><path d="M2.5 7.5h10M4.9 5L2.4 7.5l2.5 2.5M10.1 5L12.6 7.5l-2.5 2.5" fill="none" stroke="#505254" stroke-width="1.2"/></svg>
<svg style="left:489px;top:38px;" width="15" height="15" viewBox="0 0 15 15"><rect x="0.5" y="0.5" width="14" height="14" fill="#6b6d6e" stroke="#747677" stroke-width="1"/><path d="M7.5 2.5v10M5 4.9L7.5 2.4l2.5 2.5M5 10.1L7.5 12.6l2.5-2.5" fill="none" stroke="#505254" stroke-width="1.2"/></svg>
<div style="left:458px;top:61px;width:601px;height:1px;background:#35383a;"></div>
<div style="left:458px;top:62px;width:601px;height:20px;background:#414547;"></div>
<div style="left:458px;top:82px;width:20px;height:438px;background:#414547;"></div>
<svg style="left:0px;top:62px;" width="1059" height="21" viewBox="0 0 1059 21"><path d="M458.5 0v7M468.5 0v7M478.5 0v7M488.5 0v7M498.5 0v7M508.5 0v7M518.5 0v7M528.5 0v20M538.5 0v7M548.5 0v7M558.5 0v7M568.5 0v7M578.5 0v7M588.5 0v7M598.5 0v7M608.5 0v7M618.5 0v7M628.5 0v20M638.5 0v7M648.5 0v7M658.5 0v7M668.5 0v7M678.5 0v7M688.5 0v7M698.5 0v7M708.5 0v7M718.5 0v7M728.5 0v20M738.5 0v7M748.5 0v7M758.5 0v7M768.5 0v7M778.5 0v7M788.5 0v7M798.5 0v7M808.5 0v7M818.5 0v7M828.5 0v20M838.5 0v7M848.5 0v7M858.5 0v7M868.5 0v7M878.5 0v7M888.5 0v7M898.5 0v7M908.5 0v7M918.5 0v7M928.5 0v20M938.5 0v7M948.5 0v7M958.5 0v7M968.5 0v7M978.5 0v7M988.5 0v7M998.5 0v7M1008.5 0v7M1018.5 0v7M1028.5 0v20M1038.5 0v7M1048.5 0v7M1058.5 0v7" stroke="#a4a6a7" stroke-width="1" fill="none"/><path d="M458.5 0.5h6" stroke="#a4a6a7" stroke-width="1"/></svg>
<svg style="left:458px;top:62px;" width="21" height="458" viewBox="0 0 21 458"><path d="M0 10.5h7M0 20.5h7M0 30.5h7M0 40.5h7M0 50.5h7M0 60.5h7M0 70.5h20M0 80.5h7M0 90.5h7M0 100.5h7M0 110.5h7M0 120.5h7M0 130.5h7M0 140.5h7M0 150.5h7M0 160.5h7M0 170.5h20M0 180.5h7M0 190.5h7M0 200.5h7M0 210.5h7M0 220.5h7M0 230.5h7M0 240.5h7M0 250.5h7M0 260.5h7M0 270.5h20M0 280.5h7M0 290.5h7M0 300.5h7M0 310.5h7M0 320.5h7M0 330.5h7M0 340.5h7M0 350.5h7M0 360.5h7M0 370.5h20M0 380.5h7M0 390.5h7M0 400.5h7M0 410.5h7M0 420.5h7M0 430.5h7M0 440.5h7M0 450.5h7" stroke="#a4a6a7" stroke-width="1" fill="none"/></svg>
<span id="t51" class="t r" style="left:529.6px;top:72px;height:12px;line-height:12px;font-size:10px;color:#c4c6c7;letter-spacing:-0.65px;">0</span>
<span id="t52" class="t r" style="left:629.6px;top:72px;height:12px;line-height:12px;font-size:10px;color:#c4c6c7;letter-spacing:-0.65px;">100</span>
<span id="t53" class="t r" style="left:729.6px;top:72px;height:12px;line-height:12px;font-size:10px;color:#c4c6c7;letter-spacing:-0.65px;">200</span>
<span id="t54" class="t r" style="left:829.6px;top:72px;height:12px;line-height:12px;font-size:10px;color:#c4c6c7;letter-spacing:-0.65px;">300</span>
<span id="t55" class="t r" style="left:929.6px;top:72px;height:12px;line-height:12px;font-size:10px;color:#c4c6c7;letter-spacing:-0.65px;">400</span>
<span id="t56" class="t r" style="left:1029.6px;top:72px;height:12px;line-height:12px;font-size:10px;color:#c4c6c7;letter-spacing:-0.65px;">500</span>
<span class="t r v" style="left:468.5px;top:131px;font-size:10px;color:#c4c6c7;height:10px;line-height:10px;letter-spacing:-0.8px;">0</span>
<span class="t r v" style="left:468.5px;top:231px;font-size:10px;color:#c4c6c7;height:10px;line-height:10px;letter-spacing:-0.8px;">100</span>
<span class="t r v" style="left:468.5px;top:331px;font-size:10px;color:#c4c6c7;height:10px;line-height:10px;letter-spacing:-0.8px;">200</span>
<span class="t r v" style="left:468.5px;top:431px;font-size:10px;color:#c4c6c7;height:10px;line-height:10px;letter-spacing:-0.8px;">300</span>
<span class="t r v" style="left:468.5px;top:531px;font-size:10px;color:#c4c6c7;height:10px;line-height:10px;letter-spacing:-0.8px;">400</span>
<div style="left:458px;top:520px;width:21px;height:12.5px;background:#3c3f41;"></div>
<div style="left:278.5px;top:532.6px;width:781px;height:1.2px;background:#2b2b2b;"></div>
<div style="left:278.5px;top:533.8px;width:781px;height:3.4px;background:#4b4f51;"></div>
<div style="left:278.5px;top:537px;width:781px;height:1.2px;background:#2f3133;"></div>
<div style="left:278.5px;top:538.2px;width:781px;height:24px;background:#3c3f41;"></div>
<div style="left:278.5px;top:538.2px;width:9.5px;height:24px;background:#313436;"></div>
<div style="left:287.5px;top:538.2px;width:1px;height:24px;background:#2f3133;"></div>
<div style="left:288.5px;top:537px;width:53px;height:25px;background:#4e5254;"></div>
<div style="left:341.5px;top:538.2px;width:1px;height:24px;background:#2f3133;"></div>
<div style="left:392px;top:538.2px;width:1px;height:24px;background:#2f3133;"></div>
<span id="t57" class="t" style="left:297.7px;top:538px;height:24px;line-height:24px;font-size:13px;color:#bbbbbb;letter-spacing:-0.274px;">Design</span>
<span id="t58" class="t" style="left:357.3px;top:538px;height:24px;line-height:24px;font-size:13px;color:#bbbbbb;letter-spacing:0.052px;">Text</span>
<div style="left:528px;top:132px;width:202px;height:13px;background:#303f9f;"></div>
<div style="left:528px;top:145px;width:202px;height:29.7px;background:#3f51b5;"></div>
<div style="left:528px;top:174.7px;width:202px;height:270.3px;background:#fafafa;"></div>
<div style="left:528px;top:445px;width:202px;height:24.6px;background:#000;"></div>
<span id="t59" class="t r" style="left:536.5px;top:150px;height:20px;line-height:20px;font-size:10.5px;color:#fff;font-weight:bold;letter-spacing:-0.275px;">My Application</span>
<svg style="left:689.5px;top:134.5px;" width="10" height="8.5" viewBox="0 0 10 8.5"><path d="M0 2.4A7.4 7.4 0 0 1 10 2.4L5 8.3z" fill="#fff"/></svg>
<svg style="left:702px;top:134px;" width="6.5" height="9.5" viewBox="0 0 6.5 9.5"><path d="M1.8 0h2.9v1H6.3v8.3H0.2V1H1.8z" fill="#fff"/></svg>
<span id="t60" class="t r" style="left:711px;top:133px;height:12px;line-height:12px;font-size:8.5px;color:#fff;font-weight:bold;letter-spacing:-0.139px;">6:00</span>
<span id="t61" class="t r" style="left:528.2px;top:175px;height:9px;line-height:9px;font-size:7px;color:#8a8a8a;letter-spacing:0.173px;">默认!</span>
<svg style="left:716px;top:142.5px;" width="12" height="6" viewBox="0 0 12 6"><path d="M3.2 0.5a4 4 0 0 1 1.2 4.5M5.8 0.5v4.5M8.6 5a4 4 0 0 1 1.2-4.5" fill="none" stroke="#c9cde8" stroke-width="0.8"/></svg>
<svg style="left:554px;top:451px;" width="12" height="12" viewBox="0 0 12 12"><path d="M9.5 1.5v9L2 6z" fill="none" stroke="#e8e8e8" stroke-width="1.2"/></svg>
<svg style="left:623.5px;top:451.5px;" width="11" height="11" viewBox="0 0 11 11"><circle cx="5.5" cy="5.5" r="4.2" fill="none" stroke="#e8e8e8" stroke-width="1.2"/></svg>
<svg style="left:693.5px;top:452px;" width="11" height="11" viewBox="0 0 11 11"><rect x="1.2" y="1.2" width="8" height="8" rx="0.8" fill="none" stroke="#e8e8e8" stroke-width="1.2"/></svg>
<div style="left:740px;top:132px;width:202px;height:337.5px;background:#143672;"></div>
<div style="left:740px;top:174px;width:203px;height:270px;background:transparent;box-sizing:border-box;border:1px solid #3f6eb2;"></div>
<div style="left:740px;top:174px;width:17px;height:9px;background:transparent;box-sizing:border-box;border:1px solid #3f6eb2;"></div>
<span id="t62" class="t r" style="left:753.2px;top:142px;height:12px;line-height:12px;font-size:9.5px;color:#6398d4;letter-spacing:0.034px;">RelativeLayout</span>
<span id="t63" class="t r" style="left:753.2px;top:153.5px;height:12px;line-height:12px;font-size:9.5px;color:#6398d4;letter-spacing:-0.052px;">activity_main</span>
<span id="t64" class="t r" style="left:729.3px;top:174px;height:12px;line-height:12px;font-size:9.5px;color:#4f83c2;letter-spacing:-0.078px;">TextView</span>
<svg style="left:500px;top:105px;" width="260" height="395" viewBox="0 0 260 395"><path d="M8 26.5H251" stroke="#c6c8c9" stroke-width="1" stroke-dasharray="5 3" fill="none"/><path d="M8 365.5H251" stroke="#c6c8c9" stroke-width="1" stroke-dasharray="5 3" fill="none"/><path d="M27.5 7V385.5" stroke="#c6c8c9" stroke-width="1" stroke-dasharray="5 3" fill="none"/><path d="M230.5 7V385.5" stroke="#c6c8c9" stroke-width="1" stroke-dasharray="5 3" fill="none"/><path d="M234 385L251 368.5M243.5 385L251 377.5" stroke="#8a8d8f" stroke-width="1" fill="none"/></svg>
<svg style="left:0px;top:0px;pointer-events:none;" width="1059" height="562" viewBox="0 0 1059 562"><polygon points="306.3,353.7 305.7,354.3 191.0,181.0 186.7,183.6 184.4,165.3 199.7,175.1 197.4,177.8" fill="#fc3535"/><polygon points="730.0,343.0 341.2,519.1 338.9,516.3 327.0,529.9 346.0,529.9 344.6,527.0" fill="#fc3535"/><polygon points="806.3,317.0 879.0,41.4 875.3,39.8 886.7,26.6 891.1,43.5 887.0,43.0" fill="#fc3535"/></svg>
<span id="t65" class="t r n" style="left:268px;top:357px;height:32px;line-height:32px;font-size:29.5px;color:#fc3535;">1</span>
<span id="t66" class="t r n" style="left:491.7px;top:466px;height:32px;line-height:32px;font-size:29.5px;color:#fc3535;">2</span>
<span id="t67" class="t r n" style="left:832.3px;top:250px;height:32px;line-height:32px;font-size:29.5px;color:#fc3535;">3</span>
</div></body></html>
